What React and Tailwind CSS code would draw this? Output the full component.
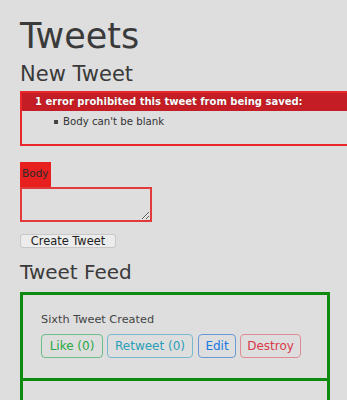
import React from "react";

const App = () => {
  return (
    <div className="min-h-[400px] overflow-hidden bg-[#dedede] pl-5 font-['DejaVu_Sans',Verdana,sans-serif] text-[#333]">
      {/* ===== HEADER ===== */}
      <h1 className="pt-[16px] text-[35px] leading-[40px] text-[#3a3a3a]">Tweets</h1>
      <h2 className="mt-[6px] text-[21px] leading-[24px] text-[#3a3a3a]">New Tweet</h2>

      {/* ===== ERRORS ===== */}
      <div className="mt-[5px] w-[340px] border-2 border-[#e8262b] pb-[13px]">
        <div className="whitespace-nowrap bg-[#c41d25] pl-[13px] text-[10px] font-bold leading-[18px] text-white [text-shadow:0_0_1px_#7a0a10]">
          1 error prohibited this tweet from being saved:
        </div>
        <ul className="mt-[2px] pl-[32px] text-[10.2px] leading-[18px]">
          <li className="flex items-center gap-[5px]">
            <span className="inline-block h-[4px] w-[4px] bg-[#444]" />
            Body can't be blank
          </li>
        </ul>
      </div>

      {/* ===== FORM ===== */}
      <div className="mt-[16px]">
        <div className="w-[31px] bg-[#e81f1f] pl-[2px] pt-[3px] pb-[6px] text-[10.5px] leading-[16px] text-[#2a2a2a]">
          Body
        </div>
        <textarea className="block h-[35px] w-[132px] resize border-2 border-[#e03a3a] bg-[#dedede] outline-none" />
        <button className="mt-[12px] block h-[14px] w-[96px] rounded-[3px] border border-[#c8c8c8] bg-[#ececec] text-[11.4px] leading-[12px] text-[#222]">
          Create Tweet
        </button>
      </div>

      {/* ===== FEED ===== */}
      <h2 className="mt-[12px] text-[20px] leading-[24px] text-[#3a3a3a]">Tweet Feed</h2>
      <div className="mt-[8px] w-[310px] border-[3px] border-b-0 border-[#0e8a0e]">
        <div className="border-b-[3px] border-[#0e8a0e] px-[18px] pt-[16px] pb-[20px]">
          <p className="text-[11.3px] leading-[18px] text-[#444]">Sixth Tweet Created</p>
          <div className="mt-[5px] flex whitespace-nowrap text-[12px] leading-[22px]">
            <button className="w-[62px] rounded-[4px] border border-[#6cbf8a] text-[#28a745]">Like (0)</button>
            <button className="ml-[4px] w-[86px] rounded-[4px] border border-[#78b8cc] text-[#2a9fb8]">Retweet (0)</button>
            <button className="ml-[5px] w-[38px] rounded-[4px] border border-[#6a98d8] text-[#1a78e0]">Edit</button>
            <button className="ml-[4px] w-[61px] rounded-[4px] border border-[#e08a94] text-[#d83a4a]">Destroy</button>
          </div>
        </div>
        <div className="h-[30px]" />
      </div>
    </div>
  );
};

export default App;
